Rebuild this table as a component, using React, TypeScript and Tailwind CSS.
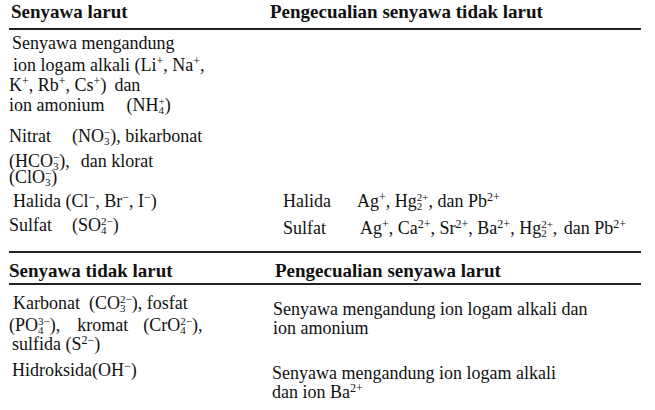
import type { ReactNode } from "react";

const FONT = "font-['Liberation_Serif','Times_New_Roman',serif]";

function Sup({ children }: { children: ReactNode }) {
  return <span className="align-[6px] text-[12px] leading-none">{children}</span>;
}

function Ion({ sub, sup }: { sub: string; sup: string }) {
  return (
    <span className="inline-flex flex-col align-[6px] text-[11px] leading-[9px]">
      <span>{sup}</span>
      <span>{sub}</span>
    </span>
  );
}

// chemical formula
function F({ children, className = "" }: { children: ReactNode; className?: string }) {
  return <span className={`text-[18px] ${className}`}>{children}</span>;
}

function Line({ h, pl, children }: { h: string; pl: string; children: ReactNode }) {
  return <div className={`${h} ${pl} whitespace-nowrap leading-[20px]`}>{children}</div>;
}

function Rule() {
  return <div className="ml-[9px] h-[2px] w-[632px] bg-[#222]" />;
}

export default function App() {
  return (
    <div className={`${FONT} h-[410px] w-[655px] overflow-hidden bg-white pt-[2px] text-[18px] text-[#111]`}>
      {/* header 1 */}
      <div className="flex h-[26px] text-[19px] font-bold">
        <div className="w-[270px] pl-[11px] leading-[20px]">Senyawa larut</div>
        <div className="leading-[20px]">Pengecualian senyawa tidak larut</div>
      </div>
      <Rule />

      {/* section 1 */}
      <div className="flex h-[221px]">
        <div className="w-[283px] pt-[3px]">
          <Line h="h-[22px]" pl="pl-[12px]">Senyawa mengandung</Line>
          <Line h="h-[20px]" pl="pl-[13px]">
            ion logam alkali{" "}
            <F>
              (Li<Sup>+</Sup>, Na<Sup>+</Sup>,
            </F>
          </Line>
          <Line h="h-[20px]" pl="pl-[9px]">
            <F>
              K<Sup>+</Sup>, Rb<Sup>+</Sup>, Cs<Sup>+</Sup>)
            </F>
            <span className="ml-[8px]">dan</span>
          </Line>
          <Line h="h-[31px]" pl="pl-[9px]">
            ion amonium
            <F className="ml-[22px]">
              (NH<Ion sub="4" sup="+" />)
            </F>
          </Line>
          <Line h="h-[25px]" pl="pl-[9px]">
            Nitrat
            <F className="ml-[21px]">
              (NO<Ion sub="3" sup="−" />)
            </F>
            , bikarbonat
          </Line>
          <Line h="h-[16px]" pl="pl-[9px]">
            <F>
              (HCO<Ion sub="3" sup="−" />),
            </F>
            <span className="ml-[11px]">dan klorat</span>
          </Line>
          <Line h="h-[24px]" pl="pl-[9px]">
            <F>
              (ClO<Ion sub="3" sup="−" />)
            </F>
          </Line>
          <Line h="h-[24px]" pl="pl-[13px]">
            Halida{" "}
            <F>
              (Cl<Sup>−</Sup>, Br<Sup>−</Sup>, I<Sup>−</Sup>)
            </F>
          </Line>
          <Line h="h-[20px]" pl="pl-[9px]">
            Sulfat
            <F className="ml-[20px]">
              (SO<Ion sub="4" sup="2−" />)
            </F>
          </Line>
        </div>
        <div className="pt-[161px]">
          <Line h="h-[27px]" pl="pl-0">
            <span className="inline-block w-[74px]">Halida</span>
            <F>
              Ag<Sup>+</Sup>, Hg<Ion sub="2" sup="2+" />, dan Pb<Sup>2+</Sup>
            </F>
          </Line>
          <Line h="h-[20px]" pl="pl-0">
            <span className="inline-block w-[77px]">Sulfat</span>
            <F>
              Ag<Sup>+</Sup>, Ca<Sup>2+</Sup>, Sr<Sup>2+</Sup>, Ba<Sup>2+</Sup>, Hg
              <Ion sub="2" sup="2+" />, <span className="ml-[2px]">dan Pb</span>
              <Sup>2+</Sup>
            </F>
          </Line>
        </div>
      </div>

      <Rule />
      {/* header 2 */}
      <div className="flex h-[30px] pt-[8px] text-[19px] font-bold">
        <div className="w-[275px] pl-[9px] leading-[20px]">Senyawa tidak larut</div>
        <div className="leading-[20px]">Pengecualian senyawa larut</div>
      </div>
      <Rule />

      {/* section 2 */}
      <div className="flex">
        <div className="w-[272px] pt-[8px]">
          <Line h="h-[22px]" pl="pl-[13px]">
            Karbonat
            <F className="ml-[9px]">
              (CO<Ion sub="3" sup="2−" />)
            </F>
            , fosfat
          </Line>
          <Line h="h-[19px]" pl="pl-[9px]">
            <F>
              (PO<Ion sub="4" sup="3−" />),
            </F>
            <span className="ml-[17px]">kromat</span>
            <F className="ml-[15px]">
              (CrO<Ion sub="4" sup="2−" />),
            </F>
          </Line>
          <Line h="h-[26px]" pl="pl-[12px]">
            sulfida{" "}
            <F>
              (S<Sup>2−</Sup>)
            </F>
          </Line>
          <Line h="h-[20px]" pl="pl-[12px]">
            Hidroksida
            <F>
              (OH<Sup>−</Sup>)
            </F>
          </Line>
        </div>
        <div className="pt-[14px]">
          <Line h="h-[19px]" pl="pl-[1px]">Senyawa mengandung ion logam alkali dan</Line>
          <Line h="h-[45px]" pl="pl-[1px]">ion amonium</Line>
          <Line h="h-[19px]" pl="pl-0">Senyawa mengandung ion logam alkali</Line>
          <Line h="h-[20px]" pl="pl-0">
            dan ion Ba<Sup>2+</Sup>
          </Line>
        </div>
      </div>
    </div>
  );
}
